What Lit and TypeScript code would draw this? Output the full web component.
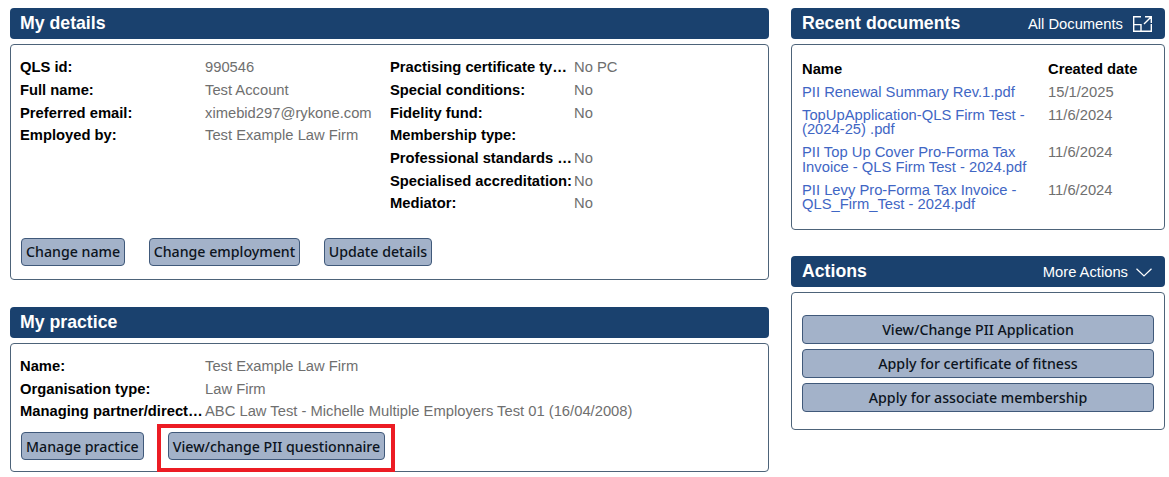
import { LitElement, html, css } from "lit";
import { customElement } from "lit/decorators.js";

const left = [
  ["QLS id:", "990546"],
  ["Full name:", "Test Account"],
  ["Preferred email:", "ximebid297@rykone.com"],
  ["Employed by:", "Test Example Law Firm"],
];
const right = [
  ["Practising certificate type:", "No PC"],
  ["Special conditions:", "No"],
  ["Fidelity fund:", "No"],
  ["Membership type:", ""],
  ["Professional standards scheme:", "No"],
  ["Specialised accreditation:", "No"],
  ["Mediator:", "No"],
];
const practice = [
  ["Name:", "Test Example Law Firm"],
  ["Organisation type:", "Law Firm"],
  ["Managing partner/director:", "ABC Law Test - Michelle Multiple Employers Test 01 (16/04/2008)"],
];
const docs = [
  ["PII Renewal Summary Rev.1.pdf", "15/1/2025"],
  ["TopUpApplication-QLS Firm Test - (2024-25) .pdf", "11/6/2024"],
  ["PII Top Up Cover Pro-Forma Tax Invoice - QLS Firm Test - 2024.pdf", "11/6/2024"],
  ["PII Levy Pro-Forma Tax Invoice - QLS_Firm_Test - 2024.pdf", "11/6/2024"],
];

@customElement("app-root")
export class AppRoot extends LitElement {
  static styles = css`
    :host {
      display: block;
      width: 1169px;
      height: 477px;
      overflow: hidden;
      background: #fff;
      font-family: "Liberation Sans", Arial, sans-serif;
      font-size: 14.75px;
      color: #000;
    }
    .page {
      display: grid;
      grid-template-columns: 759px 374px;
      column-gap: 22px;
      padding: 8px 4px 0 10px;
    }
    .col { display: flex; flex-direction: column; }
    .head {
      height: 31px;
      box-sizing: border-box;
      background: #1a416e;
      border-radius: 4px;
      color: #fff;
      display: flex;
      align-items: center;
      justify-content: space-between;
      padding: 0 13px 0 11px;
    }
    .col.l .head { padding-left: 10px; }
    .head h2 { margin: 0; font-size: 17.7px; font-weight: 700; line-height: 31px; }
    .head a {
      display: flex;
      align-items: center;
      color: #fff;
      font-size: 14.75px;
      text-decoration: none;
      padding-top: 1px;
    }
    .head svg { display: block; }
    .panel {
      margin-top: 5px;
      border: 1px solid #4d6379;
      border-radius: 4px;
      box-sizing: border-box;
      padding: 10px 10px 0;
    }
    .details { height: 236px; margin-bottom: 27px; padding: 11.3px 9px 0; }
    .prac { height: 129px; padding: 11px 9px 0; }
    .recent { height: 186px; margin-bottom: 26px; padding-top: 9px; }
    .acts { height: 138px; padding-top: 22px; }
    .info { display: grid; grid-template-columns: 370px 369px; }
    .kv { display: grid; grid-auto-rows: 22.7px; align-content: start; }
    .row { display: grid; grid-template-columns: 185px 1fr; line-height: 22.7px; white-space: nowrap; }
    .row.r { grid-template-columns: 184px 1fr; }
    .k {
      font-weight: 700;
      overflow: hidden;
      text-overflow: ellipsis;
      white-space: nowrap;
    }
    .v { color: #6f6f6f; }
    .btns { display: flex; gap: 24px; align-items: flex-start; padding-left: 1px; }
    .details .btns { margin-top: 22.7px; gap: 23.5px; }
    .prac .btns { margin-top: 9px; }
    button {
      font-family: "Noto Sans", "Open Sans", sans-serif;
      font-size: 14.2px;
      font-weight: 500;
      color: #0c1420;
      background: #a3b2c9;
      border: 1px solid #40597a;
      border-radius: 4px;
      height: 28px;
      padding: 0 4px;
      margin: 0;
      white-space: nowrap;
    }
    .mark { position: relative; display: flex; }
    .mark::after {
      content: "";
      position: absolute;
      left: -11px;
      top: -8px;
      width: 238px;
      height: 48px;
      box-sizing: border-box;
      border: 4px solid #ec1c24;
      pointer-events: none;
    }
    table { border-collapse: collapse; width: 100%; table-layout: fixed; }
    th {
      text-align: left;
      font-weight: 700;
      padding: 4px 0 0;
      line-height: 22.7px;
    }
    td { vertical-align: top; padding: 4px 0 4.6px; line-height: 14.4px; }
    td a { color: #3f66c4; text-decoration: none; display: block; width: 236px; }
    td.d { color: #6f6f6f; }
    .stack { display: flex; flex-direction: column; gap: 5px; }
    .stack button { width: 100%; height: 29px; }
  `;

  private rows(items: string[][], cls = "") {
    return items.map(
      ([k, v]) => html`<div class="row ${cls}"><span class="k">${k}</span><span class="v">${v}</span></div>`
    );
  }

  render() {
    return html`
      <div class="page">
        <div class="col l">
          <div class="head"><h2>My details</h2></div>
          <section class="panel details">
            <div class="info">
              <div class="kv">${this.rows(left)}</div>
              <div class="kv">${this.rows(right, "r")}</div>
            </div>
            <div class="btns">
              <button>Change name</button>
              <button>Change employment</button>
              <button>Update details</button>
            </div>
          </section>
          <div class="head"><h2>My practice</h2></div>
          <section class="panel prac">
            <div class="kv">${this.rows(practice)}</div>
            <div class="btns">
              <button>Manage practice</button>
              <span class="mark"><button>View/change PII questionnaire</button></span>
            </div>
          </section>
        </div>
        <div class="col">
          <div class="head">
            <h2>Recent documents</h2>
            <a href="#">All Documents
              <svg style="margin-left:10px" width="19" height="16" viewBox="0 0 19 16" fill="none" stroke="#fff" stroke-width="1.4">
                <path d="M8 .7H.7V15.3H18.3V8M.7 8.6H8V15.3M12 .7H18.3V7M18.3 .7L11 8" />
              </svg>
            </a>
          </div>
          <section class="panel recent">
            <table>
              <colgroup><col style="width:246px" /><col /></colgroup>
              <thead><tr><th>Name</th><th>Created date</th></tr></thead>
              <tbody>
                ${docs.map(
                  ([n, d]) => html`<tr><td><a href="#">${n}</a></td><td class="d">${d}</td></tr>`
                )}
              </tbody>
            </table>
          </section>
          <div class="head">
            <h2>Actions</h2>
            <a href="#">More Actions
              <svg style="margin-left:8px" width="16" height="9" viewBox="0 0 16 9" fill="none" stroke="#fff" stroke-width="1.2">
                <path d="M.5 .8L8 8L15.5 .8" />
              </svg>
            </a>
          </div>
          <section class="panel acts">
            <div class="stack">
              <button>View/Change PII Application</button>
              <button>Apply for certificate of fitness</button>
              <button>Apply for associate membership</button>
            </div>
          </section>
        </div>
      </div>
    `;
  }
}
